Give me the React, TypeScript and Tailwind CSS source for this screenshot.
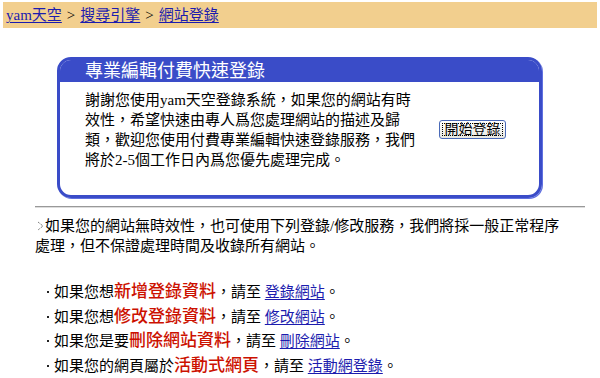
import React from "react";

const font = { fontFamily: '"Liberation Serif", "Noto Sans CJK TC", serif' };

function Link({ children }: { children: React.ReactNode }) {
  return <a className="text-[#1c1cae] underline underline-offset-2 decoration-1 cursor-pointer">{children}</a>;
}

function Red({ children }: { children: React.ReactNode }) {
  return <span className="text-[#cc1100] text-[17px] font-medium">{children}</span>;
}

export default function App() {
  const rows: [string, string, string][] = [
    ["如果您想", "新增登錄資料", "登錄網站"],
    ["如果您想", "修改登錄資料", "修改網站"],
    ["如果您是要", "刪除網站資料", "刪除網站"],
    ["如果您的網頁屬於", "活動式網頁", "活動網登錄"],
  ];
  return (
    <div className="w-[600px] h-[378px] bg-white overflow-hidden text-black text-[15px] leading-[20px]" style={font}>
      <div className="mx-[3px] mt-[2px] h-[26px] bg-[#f2cf8e] flex items-center pl-[3px] whitespace-nowrap">
        <Link>yam天空</Link>
        <span className="mx-[5px]">&gt;</span>
        <Link>搜尋引擎</Link>
        <span className="mx-[5px]">&gt;</span>
        <Link>網站登錄</Link>
      </div>

      <div className="mt-[29px] ml-[57px] w-[485px] h-[141px] border-[3px] border-[#3a4cc8] rounded-[14px] overflow-hidden flex flex-col shadow-[1px_1px_0_#6070e0]">
        <div className="h-[22px] bg-[#3a4cc8] text-white text-[18px] leading-[22px] pl-[25px] whitespace-nowrap">
          專業編輯付費快速登錄
        </div>
        <div className="flex-1 flex items-start">
          <div className="pl-[25px] pt-[8px] whitespace-nowrap">
            謝謝您使用yam天空登錄系統，如果您的網站有時
            <br />
            效性，希望快速由專人爲您處理網站的描述及歸
            <br />
            類，歡迎您使用付費專業編輯快速登錄服務，我們
            <br />
            將於2-5個工作日內爲您優先處理完成。
          </div>
          <div className="ml-[24px] mt-[38px]">
            <button className="w-[67px] h-[19px] rounded-[3px] border border-[#4a6ab8] bg-gradient-to-b from-white to-[#e8e8e2] flex items-center justify-center p-[2px]">
              <span className="border border-dotted border-black h-full w-full flex items-center justify-center text-[14px] leading-none">
                開始登錄
              </span>
            </button>
          </div>
        </div>
      </div>

      <div className="mt-[8px] ml-[35px] w-[550px] h-[2px] border-t border-[#999] border-b border-b-[#ddd]" />

      <div className="mt-[8px] ml-[35px] whitespace-nowrap">
        <div className="flex items-center">
          <svg width="10" height="20" viewBox="0 0 10 20">
            <path d="M3 6 L8 10 L3 14" fill="none" stroke="#555" strokeWidth="1" strokeDasharray="1 1" />
          </svg>
          <span>如果您的網站無時效性，也可使用下列登錄/修改服務，我們將採一般正常程序</span>
        </div>
        <div>處理，但不保證處理時間及收錄所有網站。</div>
      </div>

      <div className="mt-[24px] ml-[42px] whitespace-nowrap">
        {rows.map(([a, b, c], i) => (
          <div key={i} className="h-[24.6px] flex items-center">
            <span className="w-[12px] flex justify-center">
              <span className="w-[2px] h-[2px] bg-[#222]" />
            </span>
            <span>{a}</span>
            <Red>{b}</Red>
            <span>，請至&nbsp;</span>
            <Link>{c}</Link>
            <span>。</span>
          </div>
        ))}
      </div>
    </div>
  );
}
